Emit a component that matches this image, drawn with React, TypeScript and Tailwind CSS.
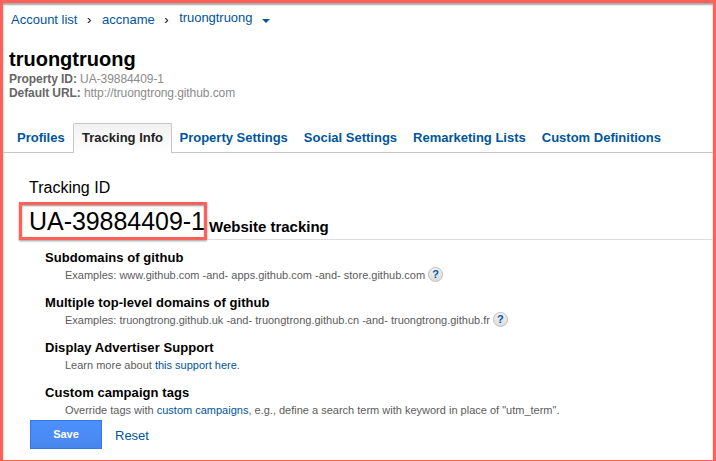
import React from "react";

const tabs = ["Property Settings", "Social Settings", "Remarketing Lists", "Custom Definitions"];

function HelpIcon() {
  return (
    <span className="ml-[3px] -mt-px flex h-[15px] w-[15px] shrink-0 items-center justify-center rounded-full border border-[#bdbdbd] bg-linear-to-b from-[#f2f2f2] to-[#dcdcdc] text-[11px] leading-none font-bold text-[#00559c]">
      ?
    </span>
  );
}

function Option({ title, help, children }: { title: string; help?: boolean; children: React.ReactNode }) {
  return (
    <div className="h-[45px] pl-[42px]">
      <h3 className="h-[19px] text-[13px] leading-[19px] font-bold tracking-[0.06px] text-black">{title}</h3>
      <div className="flex h-4 items-center pl-5 text-[11px] leading-4 whitespace-nowrap text-[#5c5c5c]">
        <span>{children}</span>
        {help && <HelpIcon />}
      </div>
    </div>
  );
}

export default function App() {
  return (
    <div className="h-[461px] w-[716px] overflow-hidden border-3 border-b border-[#ff6159] bg-white font-['Liberation_Sans',Arial,sans-serif] text-black shadow-[inset_0_2px_2px_rgba(0,0,0,0.35)]">
      <nav className="flex h-[37px] items-start pt-[9px] pl-2 text-[13px] leading-4 text-[#00559c]">
        <a>Account list</a>
        <span className="ml-[9.5px] w-[15px] text-black">›</span>
        <a>accname</a>
        <span className="ml-[9.5px] w-[15px] text-black">›</span>
        <a className="-mt-[2px] tracking-[-0.05px]">truongtruong</a>
        <svg className="mt-[7px] ml-[10px]" width="8" height="5" viewBox="0 0 8 5">
          <path d="M0 0h8L4 4z" fill="#00559c" />
        </svg>
      </nav>

      <header className="h-[77px] pl-[6px]">
        <h1 className="mt-[6px] h-[23px] text-[20px] leading-[26px] font-bold">truongtruong</h1>
        <p className="mt-[3px] text-[12px] leading-[14px] tracking-[-0.07px] text-[#8b8b8b]">
          <b className="text-[#666]">Property ID:</b> UA-39884409-1
        </p>
        <p className="text-[12px] leading-[14px] tracking-[-0.08px] text-[#8b8b8b]">
          <b className="text-[#666]">Default URL:</b> http://truongtrong.github.com
        </p>
      </header>

      <div className="flex h-[30px] items-stretch text-[13px] leading-[29px] font-bold whitespace-nowrap text-[#00559c]">
        <a className="w-[70px] border-b border-[#c6c6c6] pl-[14px]">Profiles</a>
        <a className="w-[99px] rounded-t-[2px] border border-b-0 border-[#c6c6c6] bg-linear-to-b from-[#f1f1f1] to-white text-center leading-[28px] text-[#222]">Tracking Info</a>
        <div className="flex flex-1 gap-4 border-b border-[#c6c6c6] pl-[7.5px]">
          {tabs.map((tab) => <a key={tab}>{tab}</a>)}
        </div>
      </div>

      <main>
        <h2 className="mt-[24px] h-[22px] pl-[26px] text-[16px] leading-[22px]">Tracking ID</h2>
        <div className="mt-[3px] flex h-[41px]">
          <div className="ml-4 h-[38px] w-[188px] border-3 border-[#ff6159] pl-[7px] text-[25px] leading-[33px] tracking-[-0.05px] whitespace-nowrap shadow-[0_1px_2px_rgba(0,0,0,0.4),inset_0_1px_2px_rgba(0,0,0,0.4)]">UA-39884409-1</div>
          <div className="h-[38px] flex-1 border-b border-[#dcdcdc] pl-[2px] text-[15px] leading-[49px] font-bold">Website tracking</div>
        </div>
        <section className="mt-[5px]">
          <Option title="Subdomains of github" help>Examples: www.github.com -and- apps.github.com -and- store.github.com</Option>
          <Option title="Multiple top-level domains of github" help>Examples: truongtrong.github.uk -and- truongtrong.github.cn -and- truongtrong.github.fr</Option>
          <Option title="Display Advertiser Support">Learn more about <a className="text-[#00559c]">this support here</a>.</Option>
          <Option title="Custom campaign tags">Override tags with <a className="text-[#00559c]">custom campaigns</a>, e.g., define a search term with keyword in place of "utm_term".</Option>
        </section>
        <div className="-mt-[8px] flex items-center pl-[27px]">
          <button className="h-[29px] w-[72px] border border-[#3079ed] bg-linear-to-b from-[#4d90fe] to-[#4787ed] pb-px text-[11px] font-bold text-white">Save</button>
          <a className="mt-[2px] ml-[13px] text-[13px] text-[#00559c]">Reset</a>
        </div>
      </main>
    </div>
  );
}
